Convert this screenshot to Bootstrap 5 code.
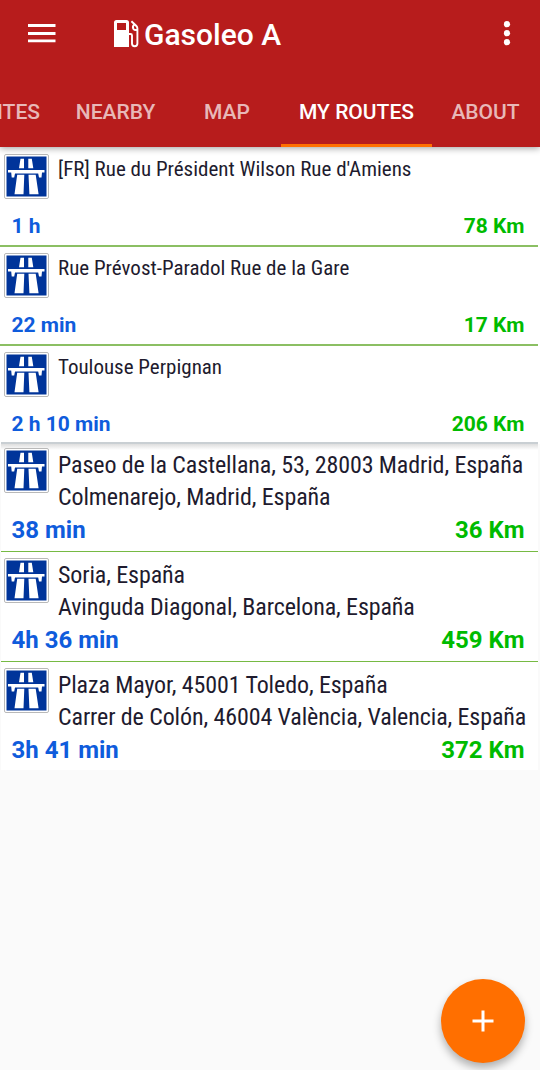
<!DOCTYPE html>
<html lang="en">
<head>
<meta charset="utf-8">
<meta name="viewport" content="width=device-width, initial-scale=1">
<title>Gasoleo A</title>
<link href="https://cdn.jsdelivr.net/npm/bootstrap@5.3.0/dist/css/bootstrap.min.css" rel="stylesheet">
<style>
body{width:540px;height:1070px;overflow:hidden;background:#fafafa;font-family:Roboto,sans-serif;color:#1e1b2e}
.app-head{height:147px;background:#b71c1c;color:#fff;box-shadow:0 1px 7px rgba(0,0,0,.4);z-index:2}
.app-bar{height:77px}
.app-title{font-size:30px;font-weight:500;line-height:40px;white-space:nowrap;padding-top:15px}
.tabs{height:70px;overflow:hidden;font-size:21px;font-weight:500;line-height:71px}
.tabs a{flex:none;height:70px;text-align:center;color:rgba(255,255,255,.7);text-decoration:none;white-space:nowrap}
.tabs a.active{color:#fff;border-bottom:3px solid #ff6f00}
.w-fav{width:58px;direction:rtl;overflow:hidden}.w-near{width:115px}.w-map{width:108px}.w-mine{width:151px}.w-about{width:107px}
.route{height:99px;margin-right:2px;background:#fff;border-bottom:2px solid #8bbf63}
.route svg.sign{width:45px;height:45px;flex:none}
.place{font-stretch:75%;font-family:"Roboto Condensed",Roboto,sans-serif;white-space:nowrap;display:block;margin-left:9px}
.stats{display:flex;justify-content:space-between;margin-left:-37.5px}
.time{color:#0f5cdc}.dist{color:#0b0}
.time,.dist{font-weight:700}
.recent{padding-top:1px;background:#fff}
.recent .stats{margin-top:27px}
.recent .route{padding:6px 13.5px 0 4px;font-size:21px;line-height:30px}
.recent .route:last-child{border:0;height:98px}
.saved{margin-left:1px;position:relative}
.saved::before{content:"";position:absolute;left:0;right:2px;top:-2px;height:8px;background:linear-gradient(#c9cfd3 0 2px,#dedede 2px,#fff)}
.saved .route{height:110px;padding:6px 13.5px 0 3px;font-size:24px;line-height:32px;border-bottom:1px solid #76ba43}
.saved .route:first-child{height:108px;padding-top:4px}
.saved .place{letter-spacing:-.11px}
.saved .sign{position:relative}
.saved .stats{padding-top:1px}
.saved .body-col{min-width:0;padding-top:1px}
.saved .route:last-child{border:0;height:108px}
.fab{position:absolute;left:441px;top:979px;width:84px;height:84px;background:#ff6f00;box-shadow:0 5px 9px rgba(0,0,0,.3)}
</style>
</head>
<body class="position-relative">
<svg width="0" height="0" class="position-absolute"><defs><symbol id="sign" viewBox="0 0 45 45">
<rect x=".5" y=".5" width="44" height="44" rx="1.5" fill="#fff" stroke="#b9b9b9"/>
<path d="M2.5 2.5h40v40h-40z" fill="#00349a"/>
<path d="M16.500 4.800h3.500v9.400h-5zM24.300 4.800h3.500l1.500 9.400h-5zM4 16h36.500v2.600h-2.500l-.5 5H35l-.800-4H11l-.800 4H7.700l-.5-5H4zM13.200 20.700h7.100l-.8 19.500h-9zM24.500 20.700h7.200l2.900 19.500h-9.200z" fill="#fff"/>
</symbol></defs></svg>
<header class="app-head position-relative">
<div class="app-bar d-flex align-items-start">
<svg width="84" height="60"><path d="M28 25.500h27.500M28 33.500h27.500M28 40.800h27.500" stroke="#fff" stroke-width="2.800"/></svg>
<svg width="60" height="60" viewBox="84 0 60 60"><path fill="#fff" fill-rule="evenodd" d="M114 47V22.500q0-2.500 2.500-2.500h10q2.500 0 2.500 2.500V47zM117 23v7h9v-7z"/><path d="M129 34h1.500q1.500 0 1.500 1.500V43.500a2.700 2.700 0 0 0 5.400 0V28.500q0-1.500-1-2.500l-5-4.800M134.300 24.500q-2.200 2-1 4.300 1.500 1.800 4 1" fill="none" stroke="#fff" stroke-width="1.900"/></svg>
<span class="app-title">Gasoleo A</span>
<svg class="ms-auto" width="60" height="60"><g fill="#fff"><circle cx="27" cy="24.200" r="3.100"/><circle cx="27" cy="33.200" r="3.100"/><circle cx="27" cy="42.200" r="3.100"/></g></svg>
</div>
<nav class="tabs d-flex"><a class="w-fav"><bdi style="padding-right:18px">FAVORITES</bdi></a><a class="w-near">NEARBY</a><a class="w-map">MAP</a><a class="w-mine active">MY ROUTES</a><a class="w-about">ABOUT</a></nav>
</header>
<main>
<section class="recent">
<article class="route d-flex"><svg class="sign"><use href="#sign"/></svg><div class="flex-grow-1"><span class="place">[FR] Rue du Président Wilson Rue d'Amiens</span><div class="stats"><span class="time">1 h</span><span class="dist">78 Km</span></div></div></article>
<article class="route d-flex"><svg class="sign"><use href="#sign"/></svg><div class="flex-grow-1"><span class="place">Rue Prévost-Paradol Rue de la Gare</span><div class="stats"><span class="time">22 min</span><span class="dist">17 Km</span></div></div></article>
<article class="route d-flex"><svg class="sign"><use href="#sign"/></svg><div class="flex-grow-1"><span class="place">Toulouse Perpignan</span><div class="stats"><span class="time">2 h 10 min</span><span class="dist">206 Km</span></div></div></article>
</section>
<section class="saved">
<article class="route d-flex"><svg class="sign"><use href="#sign"/></svg><div class="body-col flex-grow-1"><span class="place">Paseo de la Castellana, 53, 28003 Madrid, España</span><span class="place">Colmenarejo, Madrid, España</span><div class="stats"><span class="time">38 min</span><span class="dist">36 Km</span></div></div></article>
<article class="route d-flex"><svg class="sign"><use href="#sign"/></svg><div class="body-col flex-grow-1"><span class="place">Soria, España</span><span class="place">Avinguda Diagonal, Barcelona, España</span><div class="stats"><span class="time">4h 36 min</span><span class="dist">459 Km</span></div></div></article>
<article class="route d-flex"><svg class="sign"><use href="#sign"/></svg><div class="body-col flex-grow-1"><span class="place">Plaza Mayor, 45001 Toledo, España</span><span class="place">Carrer de Colón, 46004 València, Valencia, España</span><div class="stats"><span class="time">3h 41 min</span><span class="dist">372 Km</span></div></div></article>
</section>
</main>
<button class="fab btn rounded-circle border-0 p-0" aria-label="Add"><svg width="84" height="84" class="d-block"><path d="M31.500 42h21M42 31.500v21" stroke="#fff" stroke-width="3"/></svg></button>
<script src="https://cdn.jsdelivr.net/npm/bootstrap@5.3.0/dist/js/bootstrap.bundle.min.js"></script>
</body>
</html>
